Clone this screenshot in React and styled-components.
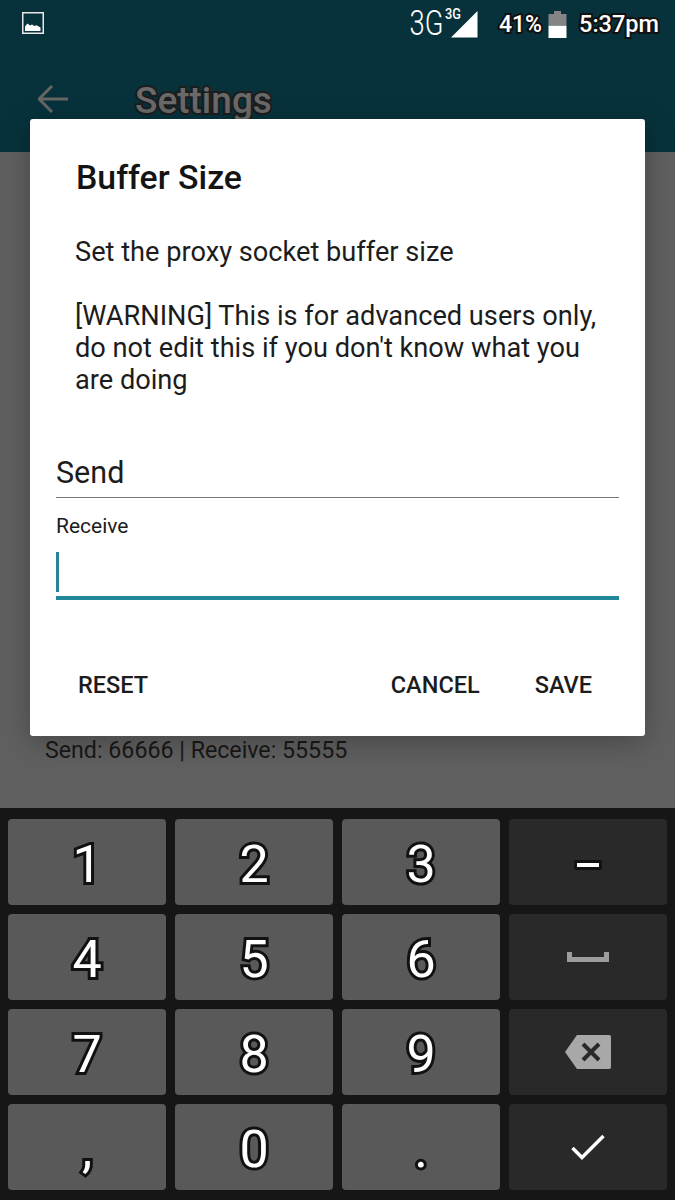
import React from 'react'
import styled, { createGlobalStyle } from 'styled-components'

const Global = createGlobalStyle`
  html, body { margin: 0; padding: 0; background: #161616; }
  body { font-family: Roboto, "Liberation Sans", sans-serif; }
  * { box-sizing: border-box; }
`

const Screen = styled.div`
  position: relative;
  width: 675px;
  height: 1200px;
  display: flex;
  flex-direction: column;
  overflow: hidden;
`

const StatusBar = styled.div`
  height: 48px;
  padding: 0 16px 0 22px;
  display: flex;
  align-items: center;
  background: #07323c;
`

const PictureSlot = styled.div`
  display: flex;
  margin-bottom: 2px;
`

const StatusRight = styled.div`
  margin-left: auto;
  display: flex;
  align-items: center;
`

const Outlined = styled.span`
  color: #fff;
  font-size: ${p => p.$size}px;
  font-weight: 500;
  margin: 0 ${p => p.$right || 0}px 0 ${p => p.$left || 0}px;
  -webkit-text-stroke: 4px #111;
  paint-order: stroke fill;
`

const NetworkText = styled.span`
  color: #fff;
  font-size: 35px;
  font-weight: 300;
  line-height: 36px;
  transform: scaleX(0.78);
  transform-origin: right;
`

const NetworkSup = styled.span`
  color: #fff;
  font-size: 15px;
  font-weight: 500;
  line-height: 15px;
  align-self: flex-start;
  margin: 1px 0 0 2px;
  transform: scaleX(0.85);
  transform-origin: left;
  width: 6px;
  white-space: nowrap;
`

const AppBar = styled.div`
  height: 104px;
  padding: 0 0 0 38px;
  display: flex;
  align-items: center;
  background: #07323c;
`

const BackSlot = styled.div`
  display: flex;
  margin-bottom: 2px;
`

const Title = styled.span`
  color: #6a6a6a;
  font-size: 37px;
  font-weight: 500;
  margin-left: 67px;
  -webkit-text-stroke: 4px #1d1d1d;
  paint-order: stroke fill;
`

const Content = styled.div`
  flex: 1;
  padding: 0 45px 43px;
  display: flex;
  align-items: flex-end;
  background: #606060;
`

const ContentText = styled.span`
  color: #181818;
  font-size: 23.2px;
  line-height: 30px;
`

const Dialog = styled.div`
  position: absolute;
  left: 30px;
  top: 119px;
  width: 615px;
  height: 617px;
  padding: 38px 26px 0;
  display: flex;
  flex-direction: column;
  background: #fff;
  border-radius: 3px;
  box-shadow: 0 6px 30px rgba(0, 0, 0, 0.28);
`

const DialogTitle = styled.div`
  margin-left: 20px;
  color: #141414;
  font-size: 33.8px;
  font-weight: 500;
  line-height: 42px;
`

const Message = styled.div`
  margin: ${p => p.$top}px 0 0 19px;
  color: #1c1c1c;
  font-size: 27.2px;
  line-height: 32px;
`

const SendValue = styled.div`
  margin-top: 52px;
  height: 50px;
  padding-top: 6px;
  border-bottom: 1.5px solid #777;
  color: #1c1c1c;
  font-size: 30.5px;
  line-height: 38px;
`

const ReceiveLabel = styled.div`
  margin-top: 16px;
  color: #1c1c1c;
  font-size: 21px;
  line-height: 24px;
`

const ReceiveField = styled.div`
  margin-top: 9px;
  height: 53px;
  padding-top: 5px;
  border-bottom: 4px solid #23879a;
`

const Caret = styled.div`
  width: 3px;
  height: 40px;
  background: #2b8494;
`

const Actions = styled.div`
  margin-top: 70px;
  padding: 0 27px 0 22px;
  display: flex;
  gap: 55px;
`

const Action = styled.span`
  color: #1c1c1c;
  font-size: 23.5px;
  font-weight: 500;
  line-height: 30px;
  margin-right: ${p => (p.$push ? 'auto' : 0)};
`

const Keyboard = styled.div`
  height: 392px;
  padding: 11px 8px 9px;
  display: grid;
  grid-template-columns: repeat(4, 158px);
  grid-template-rows: repeat(4, 86px);
  gap: 9px;
  background: #161616;
`

const Key = styled.div`
  display: flex;
  align-items: center;
  justify-content: center;
  padding-top: ${p => (p.$dark ? 0 : 6)}px;
  border-radius: 4px;
  background: ${p => (p.$dark ? '#292929' : '#595959')};
`

const Digit = styled.span`
  color: #fff;
  font-size: 52px;
  line-height: 1;
  -webkit-text-stroke: 6px #111;
  paint-order: stroke fill;
`

const MinusSlot = styled.div`
  display: flex;
  margin-top: 6px;
`

function PictureIcon() {
  return (
    <svg width="22" height="22" viewBox="0 0 22 22">
      <rect x="0.75" y="0.75" width="20.5" height="20.5" fill="#07323c" stroke="#e9e9e9" strokeWidth="1.5" />
      <path d="M3 19v-4.5l2.5-3 2.5 2 2-1 2.5 1.5 2-.8 4 2.3V19z" fill="#fff" />
    </svg>
  )
}

function SignalIcon() {
  return (
    <svg width="27" height="27" viewBox="0 0 27 27">
      <path d="M0 26.5 26.5 0v26.5z" fill="#fff" />
    </svg>
  )
}

function BatteryIcon() {
  return (
    <svg width="19" height="27" viewBox="0 0 19 27">
      <path d="M6 0h7v3h5.5v11H.5V3H6z" fill="#848484" />
      <rect x="0.5" y="14.5" width="18" height="12.5" fill="#fff" />
    </svg>
  )
}

function BackIcon() {
  return (
    <svg width="30" height="30" viewBox="2 0 30 30" fill="none" stroke="#666" strokeWidth="3">
      <path d="M32 15H3M16 2 3 15l13 13" />
    </svg>
  )
}

function SpaceIcon() {
  return (
    <svg width="42" height="10" viewBox="0 0 42 10">
      <path d="M0 0h5v5h32V0h5v10H0z" fill="#9c9c9c" />
    </svg>
  )
}

function BackspaceIcon() {
  return (
    <svg width="46" height="34" viewBox="0 0 46 34">
      <path d="M12 0h32a2 2 0 0 1 2 2v30a2 2 0 0 1-2 2H12L0 17z" fill="#a8a8a8" />
      <path d="M18 9l16 16M34 9 18 25" fill="none" stroke="#292929" strokeWidth="4" />
    </svg>
  )
}

function CheckIcon() {
  return (
    <svg width="34" height="26" viewBox="0 0 34 26" fill="none" stroke="#fff" strokeWidth="3.5">
      <path d="M1.5 14 11 23.5 32.5 2" />
    </svg>
  )
}

function MinusIcon() {
  return (
    <MinusSlot>
      <svg width="28" height="10" viewBox="0 0 28 10">
        <rect width="28" height="10" rx="2" fill="#111" />
        <rect x="3" y="3" width="22" height="4" fill="#fff" />
      </svg>
    </MinusSlot>
  )
}

const keys = [
  { label: '1' }, { label: '2' }, { label: '3' }, { icon: <MinusIcon />, dark: true },
  { label: '4' }, { label: '5' }, { label: '6' }, { icon: <SpaceIcon />, dark: true },
  { label: '7' }, { label: '8' }, { label: '9' }, { icon: <BackspaceIcon />, dark: true },
  { label: ',' }, { label: '0' }, { label: '.' }, { icon: <CheckIcon />, dark: true },
]

export default function App() {
  return (
    <Screen>
      <Global />
      <StatusBar>
        <PictureSlot><PictureIcon /></PictureSlot>
        <StatusRight>
          <NetworkText>3G</NetworkText>
          <NetworkSup>3G</NetworkSup>
          <SignalIcon />
          <Outlined $size={23} $left={21} $right={6}>41%</Outlined>
          <BatteryIcon />
          <Outlined $size={23.5} $left={12}>5:37pm</Outlined>
        </StatusRight>
      </StatusBar>
      <AppBar>
        <BackSlot><BackIcon /></BackSlot>
        <Title>Settings</Title>
      </AppBar>
      <Content>
        <ContentText>Send: 66666 | Receive: 55555</ContentText>
      </Content>
      <Keyboard>
        {keys.map((k, i) => (
          <Key key={i} $dark={k.dark}>
            {k.icon || <Digit>{k.label}</Digit>}
          </Key>
        ))}
      </Keyboard>
      <Dialog>
        <DialogTitle>Buffer Size</DialogTitle>
        <Message $top={37}>Set the proxy socket buffer size</Message>
        <Message $top={32}>
          [WARNING] This is for advanced users only,<br />
          do not edit this if you don't know what you<br />
          are doing
        </Message>
        <SendValue>Send</SendValue>
        <ReceiveLabel>Receive</ReceiveLabel>
        <ReceiveField><Caret /></ReceiveField>
        <Actions>
          <Action $push>RESET</Action>
          <Action>CANCEL</Action>
          <Action>SAVE</Action>
        </Actions>
      </Dialog>
    </Screen>
  )
}
